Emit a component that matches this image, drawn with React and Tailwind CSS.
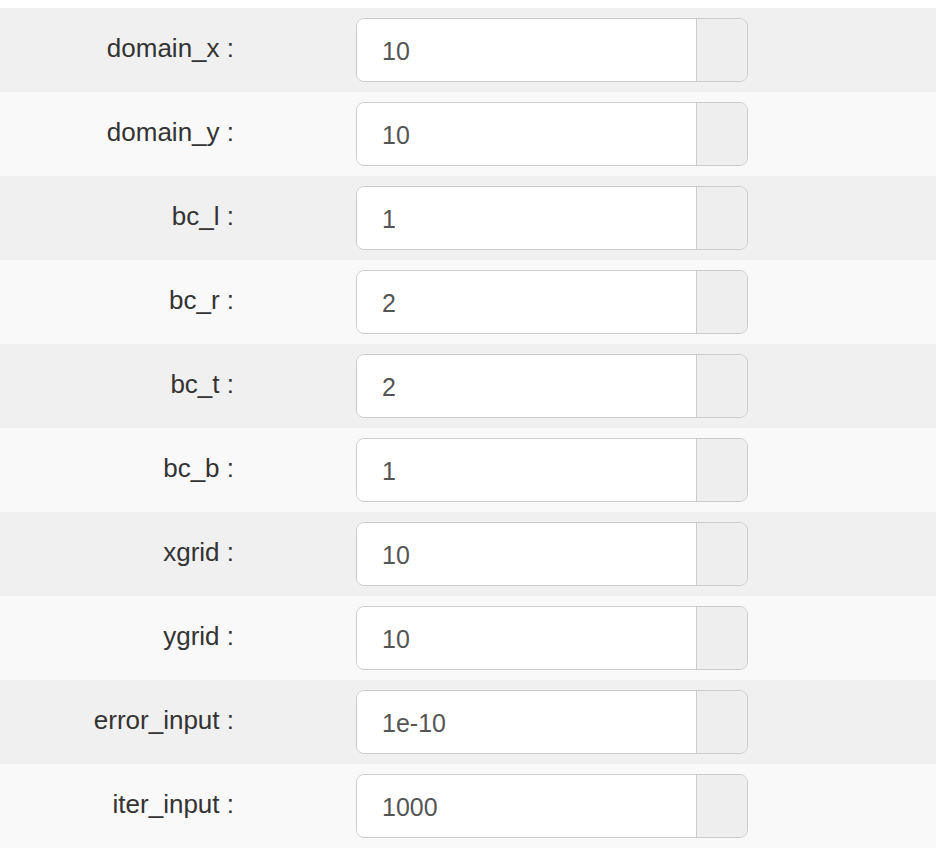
import React from "react";

const rows = [
  ["domain_x :", "10"],
  ["domain_y :", "10"],
  ["bc_l :", "1"],
  ["bc_r :", "2"],
  ["bc_t :", "2"],
  ["bc_b :", "1"],
  ["xgrid :", "10"],
  ["ygrid :", "10"],
  ["error_input :", "1e-10"],
  ["iter_input :", "1000"],
];

export default function App() {
  return (
    <div
      className="w-[936px] h-[848px] bg-white pt-[8px] overflow-hidden"
      style={{ fontFamily: '"Liberation Sans", Arial, Helvetica, sans-serif' }}
    >
      {rows.map(([label, value], i) => (
        <div
          key={i}
          className={`flex items-center h-[84px] ${i % 2 === 0 ? "bg-[#f0f0f0]" : "bg-[#f9f9f9]"}`}
        >
          <div className="w-[234px] text-right text-[26px] text-[#333] pb-[3px] whitespace-pre">
            {label}
          </div>
          <div className="ml-[122px] w-[392px] h-[64px] flex border border-[#ccc] rounded-[8px] overflow-hidden">
            <div className="w-[340px] bg-white border-r border-[#ccc] flex items-center pl-[25px] pt-[3px] text-[25px] text-[#555]">
              {value}
            </div>
            <div className="flex-1 bg-[#eee]" />
          </div>
        </div>
      ))}
    </div>
  );
}
